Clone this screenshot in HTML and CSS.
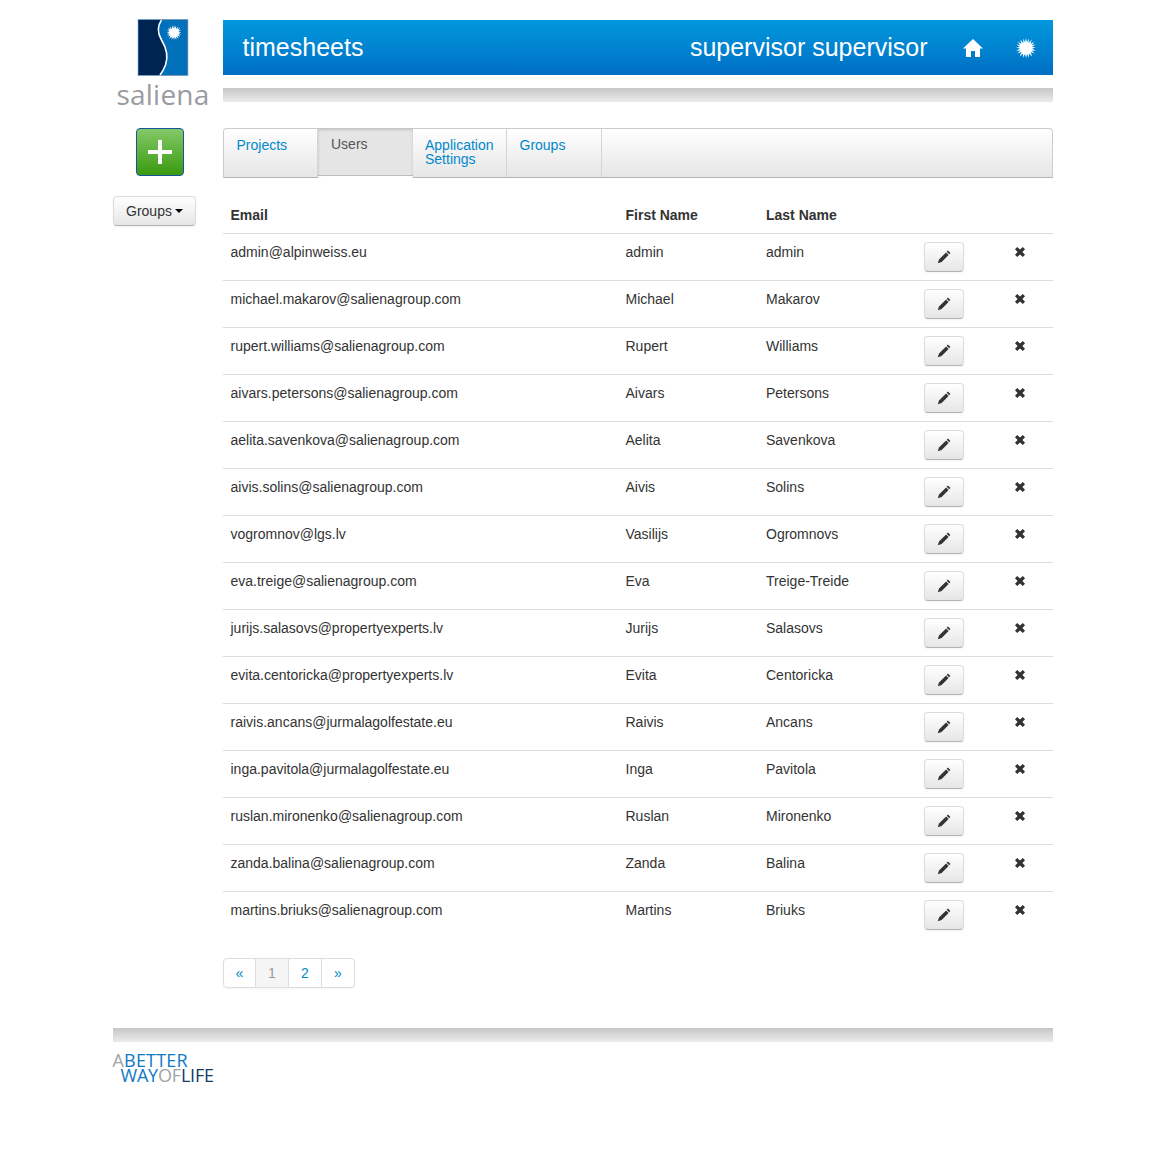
FILE: index.html
```html
<!DOCTYPE html>
<html lang="en">
<head>
<meta charset="utf-8">
<title>timesheets</title>
<link rel="stylesheet" href="styles.css">
</head>
<body>
<svg class="sprites" width="0" height="0" aria-hidden="true">
  <defs>
    <symbol id="pencil" viewBox="0 0 14 14">
      <path d="M10.9.6 13.4 3.1 12.2 4.3 9.7 1.8ZM9.1 2.4 11.6 4.9 4.6 12 .8 13.2 2 9.4Z"/>
    </symbol>
    <symbol id="cross" viewBox="0 0 10 10">
      <path d="M2.2 0 5 2.6 7.8 0 10 2.2 7.4 5 10 7.8 7.8 10 5 7.4 2.2 10 0 7.8 2.6 5 0 2.2Z"/>
    </symbol>
    <symbol id="sun" viewBox="0 0 20 20">
      <path d="M10 0 11 4.6 12.6.6 12.7 5.2 15.6 1.6 14.6 6.1 18.3 3.4 15.9 7.3 19.6 6.2 16 8.9 20 9.5 16.1 10.6 19.8 12.8 15.6 12.4 18.6 15.6 14.6 14.1 16.2 18.4 12.9 15.5 13 19.8 11 15.9 10 20 9 15.9 7 19.8 7.1 15.5 3.8 18.4 5.4 14.1 1.4 15.6 4.4 12.4.2 12.8 3.9 10.6 0 9.5 4 8.9.4 6.2 4.1 7.3 1.7 3.4 5.4 6.1 4.4 1.6 7.3 5.2 7.4.6 9 4.6Z"/>
    </symbol>
  </defs>
</svg>
<div class="page">
  <div class="top">
    <div class="brand">
      <svg class="brand-mark" viewBox="0 0 51 57" width="51" height="57" aria-hidden="true">
        <rect x="0.5" y="0.5" width="50" height="56" fill="#0070bb" stroke="#7d9cbc"/>
        <path d="M1 1H24C19 8 20 14 24 21 29 29 31 37 28 46 26.5 50 24 54 22.5 56H1Z" fill="#002451"/>
        <path d="M24 1C19 8 20 14 24 21 29 29 31 37 28 46 26.5 50 24 54 22.5 56" fill="none" stroke="#fff" stroke-width="1.6"/>
        <use href="#sun" x="29" y="6" width="15" height="15" fill="#fff"/>
      </svg>
      <div class="brand-name">saliena</div>
    </div>
    <div class="top-main">
      <header class="banner">
        <div class="banner-title">timesheets</div>
        <div class="banner-user">supervisor supervisor</div>
        <svg class="banner-home" viewBox="0 0 20 18" width="20" height="18" aria-hidden="true">
          <path d="M10 0 20 9.6H17V18H12V12H8V18H3V9.6H0Z" fill="#fff"/>
        </svg>
        <svg class="banner-sun" width="20" height="20" aria-hidden="true"><use href="#sun" fill="#fff"/></svg>
      </header>
      <div class="rule"></div>
    </div>
  </div>

  <div class="content">
    <aside class="side">
      <button class="add" type="button" aria-label="Add">
        <svg viewBox="0 0 24 24" width="24" height="24" aria-hidden="true"><path d="M10 0h4v10h10v4H14v10h-4V14H0v-4h10Z" fill="#fff"/></svg>
      </button>
      <button class="btn groups" type="button">Groups <span class="caret"></span></button>
    </aside>
    <main class="main">
      <nav class="tabs">
        <a class="tab" href="#">Projects</a>
        <a class="tab active" href="#">Users</a>
        <a class="tab" href="#">Application Settings</a>
        <a class="tab" href="#">Groups</a>
      </nav>
      <table class="users">
        <colgroup><col class="c1"><col class="c2"><col class="c3"><col class="c4"><col class="c5"></colgroup>
        <thead><tr><th>Email</th><th>First Name</th><th>Last Name</th><th></th><th></th></tr></thead>
        <tbody id="rows">
          <tr><td>admin@alpinweiss.eu</td><td>admin</td><td>admin</td><td><a class="btn edit" href="#"><svg width="14" height="14"><use href="#pencil"/></svg></a></td><td><svg class="del" width="10" height="10"><use href="#cross"/></svg></td></tr>
          <tr><td>michael.makarov@salienagroup.com</td><td>Michael</td><td>Makarov</td><td><a class="btn edit" href="#"><svg width="14" height="14"><use href="#pencil"/></svg></a></td><td><svg class="del" width="10" height="10"><use href="#cross"/></svg></td></tr>
          <tr><td>rupert.williams@salienagroup.com</td><td>Rupert</td><td>Williams</td><td><a class="btn edit" href="#"><svg width="14" height="14"><use href="#pencil"/></svg></a></td><td><svg class="del" width="10" height="10"><use href="#cross"/></svg></td></tr>
          <tr><td>aivars.petersons@salienagroup.com</td><td>Aivars</td><td>Petersons</td><td><a class="btn edit" href="#"><svg width="14" height="14"><use href="#pencil"/></svg></a></td><td><svg class="del" width="10" height="10"><use href="#cross"/></svg></td></tr>
          <tr><td>aelita.savenkova@salienagroup.com</td><td>Aelita</td><td>Savenkova</td><td><a class="btn edit" href="#"><svg width="14" height="14"><use href="#pencil"/></svg></a></td><td><svg class="del" width="10" height="10"><use href="#cross"/></svg></td></tr>
          <tr><td>aivis.solins@salienagroup.com</td><td>Aivis</td><td>Solins</td><td><a class="btn edit" href="#"><svg width="14" height="14"><use href="#pencil"/></svg></a></td><td><svg class="del" width="10" height="10"><use href="#cross"/></svg></td></tr>
          <tr><td>vogromnov@lgs.lv</td><td>Vasilijs</td><td>Ogromnovs</td><td><a class="btn edit" href="#"><svg width="14" height="14"><use href="#pencil"/></svg></a></td><td><svg class="del" width="10" height="10"><use href="#cross"/></svg></td></tr>
          <tr><td>eva.treige@salienagroup.com</td><td>Eva</td><td>Treige-Treide</td><td><a class="btn edit" href="#"><svg width="14" height="14"><use href="#pencil"/></svg></a></td><td><svg class="del" width="10" height="10"><use href="#cross"/></svg></td></tr>
          <tr><td>jurijs.salasovs@propertyexperts.lv</td><td>Jurijs</td><td>Salasovs</td><td><a class="btn edit" href="#"><svg width="14" height="14"><use href="#pencil"/></svg></a></td><td><svg class="del" width="10" height="10"><use href="#cross"/></svg></td></tr>
          <tr><td>evita.centoricka@propertyexperts.lv</td><td>Evita</td><td>Centoricka</td><td><a class="btn edit" href="#"><svg width="14" height="14"><use href="#pencil"/></svg></a></td><td><svg class="del" width="10" height="10"><use href="#cross"/></svg></td></tr>
          <tr><td>raivis.ancans@jurmalagolfestate.eu</td><td>Raivis</td><td>Ancans</td><td><a class="btn edit" href="#"><svg width="14" height="14"><use href="#pencil"/></svg></a></td><td><svg class="del" width="10" height="10"><use href="#cross"/></svg></td></tr>
          <tr><td>inga.pavitola@jurmalagolfestate.eu</td><td>Inga</td><td>Pavitola</td><td><a class="btn edit" href="#"><svg width="14" height="14"><use href="#pencil"/></svg></a></td><td><svg class="del" width="10" height="10"><use href="#cross"/></svg></td></tr>
          <tr><td>ruslan.mironenko@salienagroup.com</td><td>Ruslan</td><td>Mironenko</td><td><a class="btn edit" href="#"><svg width="14" height="14"><use href="#pencil"/></svg></a></td><td><svg class="del" width="10" height="10"><use href="#cross"/></svg></td></tr>
          <tr><td>zanda.balina@salienagroup.com</td><td>Zanda</td><td>Balina</td><td><a class="btn edit" href="#"><svg width="14" height="14"><use href="#pencil"/></svg></a></td><td><svg class="del" width="10" height="10"><use href="#cross"/></svg></td></tr>
          <tr><td>martins.briuks@salienagroup.com</td><td>Martins</td><td>Briuks</td><td><a class="btn edit" href="#"><svg width="14" height="14"><use href="#pencil"/></svg></a></td><td><svg class="del" width="10" height="10"><use href="#cross"/></svg></td></tr>
        </tbody>
      </table>
      <ul class="pager">
        <li><a href="#">«</a></li>
        <li class="current"><a href="#">1</a></li>
        <li><a href="#">2</a></li>
        <li><a href="#">»</a></li>
      </ul>
    </main>
  </div>

  <footer class="footer">
    <div class="rule"></div>
    <div class="tagline">
      <div class="tag-line first"><span class="t-grey">A</span><span class="t-blue">BETTER</span></div>
      <div class="tag-line second"><span class="t-blue">WAY</span><span class="t-grey">OF</span><span class="t-navy">LIFE</span></div>
    </div>
  </footer>
</div>
</body>
</html>
```
FILE: styles.css
```css
* { box-sizing: border-box; }
html, body { margin: 0; padding: 0; background: #fff; }
body { font-family: "Liberation Sans", Arial, sans-serif; font-size: 14px; line-height: 20px; color: #333; }
a { color: #0088cc; text-decoration: none; }
.sprites { display: block; height: 0; }

.page { width: 940px; margin: 0 auto; padding-top: 20px; }

.top { display: flex; }
.brand { width: 110px; height: 82px; display: flex; flex-direction: column; align-items: center; flex: none; margin-top: -1px; }
.brand-mark { display: block; flex: none; transform: translateX(-4.5px); }
.brand-name { font-family: "Open Sans", sans-serif; font-size: 28px; line-height: 30px; letter-spacing: .2px; color: #9a9ba0; margin-top: 3px; white-space: nowrap; flex: none; transform: translateX(-4.5px); }
.top-main { flex: 1; }

.banner { height: 55px; display: flex; align-items: center; padding: 0 17px 1px 20px; color: #fff; background: linear-gradient(#0198dd, #006fc4); }
.banner-title { font-size: 25px; line-height: 28px; flex: 1; }
.banner-user { font-size: 25px; line-height: 28px; margin-right: 35px; }
.banner-home { margin: 2px 33px 0 0; }
.banner-sun { display: block; margin-top: 2px; }

.rule { height: 14px; background: linear-gradient(#c6c6c6, #ebebeb); }
.top-main .rule { margin-top: 13px; }

.content { display: flex; margin-top: 26px; }
.side { width: 110px; flex: none; display: flex; flex-direction: column; align-items: flex-start; }
.add { width: 48px; height: 48px; margin-left: 23px; padding: 0; display: flex; align-items: center; justify-content: center; border: 1px solid #14559d; border-radius: 4px; background: linear-gradient(#84c867, #3a9a10); }
.btn { display: inline-flex; align-items: center; justify-content: center; border: 1px solid #dcdcdc; border-bottom-color: #b3b3b3; border-radius: 4px; color: #333; background: linear-gradient(#fff, #e6e6e6); box-shadow: 0 1px 2px rgba(0,0,0,.05); font: inherit; }
.groups { width: 83px; height: 30px; margin-top: 20px; padding: 0 0 0 1px; }
.caret { display: inline-block; width: 0; height: 0; margin-left: 3px; border-top: 4px solid #000; border-left: 4px solid transparent; border-right: 4px solid transparent; }

.main { flex: 1; min-width: 0; }

.tabs { height: 50px; display: flex; border: 1px solid #ccc; border-bottom-color: #b5b5b5; border-radius: 4px 4px 0 0; background: linear-gradient(#fff, #e6e6e6); }
.tab { width: 94.5px; height: 48px; flex: none; padding: 9px 13px 0 12.5px; line-height: 14px; border-right: 1px solid #d4d4d4; }
.tab:first-child { border-radius: 4px 0 0 0; padding-left: 13px; }
.tab.active { color: #555; margin-top: -1px; height: 50px; padding: 9px 12px 0 13px; background: linear-gradient(#e5e5e5 47px, #bcbcbc 47px, #bcbcbc 48px, #fff 48px); box-shadow: inset 0 2px 3px rgba(0,0,0,.15); border: 0; }

.users { width: 830px; border-collapse: collapse; table-layout: fixed; margin-top: 18px; }
.c1 { width: 395px; } .c2 { width: 140.5px; } .c3 { width: 157.5px; } .c4 { width: 90px; } .c5 { width: 47px; }
.users th, .users td { padding: 8px; text-align: left; vertical-align: top; line-height: 20px; }
.users th { vertical-align: bottom; font-weight: bold; height: 37px; }
.users td { border-top: 1px solid #ddd; height: 47px; }
.edit { width: 40px; height: 30px; vertical-align: top; }
.edit svg { fill: #333; display: block; }
.del { display: block; fill: #333; margin: 5px 0 0 1px; }

.pager { list-style: none; margin: 20px 0 40px; padding: 0; display: inline-flex; vertical-align: top; border: 1px solid #ddd; border-radius: 4px; box-shadow: 0 1px 2px rgba(0,0,0,.05); }
.pager li { border-left: 1px solid #ddd; }
.pager li:first-child { border-left: 0; }
.pager a { display: block; width: 32px; height: 28px; padding-left: 1px; line-height: 28px; text-align: center; }
.pager li:first-child a { width: 31px; }
.pager .current a { color: #999; background: #f5f5f5; }

.footer .rule { margin: 0; }
.tagline { margin-top: 11px; font-family: "Open Sans", sans-serif; font-size: 18px; font-weight: 500; line-height: 15px; }
.tag-line.first { letter-spacing: .2px; }
.tag-line.second { margin-left: 8px; letter-spacing: -.2px; }
.t-grey { color: #a2a4a8; }
.t-blue { color: #0f78c4; }
.t-navy { color: #123c66; }
```
